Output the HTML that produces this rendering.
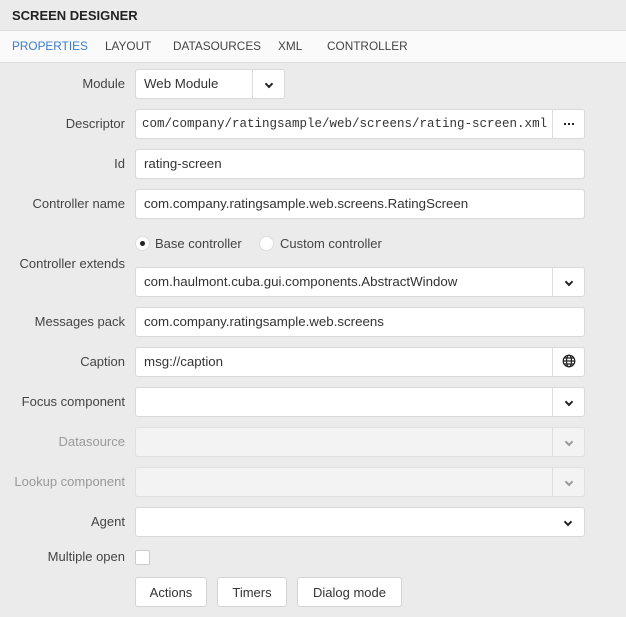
<!DOCTYPE html>
<html><head><style>
*{box-sizing:border-box;margin:0;padding:0}
body{width:626px;height:617px;background:#ebebeb;font-family:"Liberation Sans",sans-serif;font-size:13px;color:#333;position:relative;overflow:hidden}
.hdr{position:absolute;left:0;top:0;width:626px;height:31px;border-bottom:1px solid #ddd;font-weight:bold;font-size:13px;padding:8px 0 0 12px;color:#222}
.tabs{position:absolute;left:0;top:31px;width:626px;height:32px;background:#fafafa;border-bottom:1px solid #ddd}
.tabs span{position:absolute;top:8px;color:#444;font-size:11.8px}
.lbl{position:absolute;right:501px;text-align:right;white-space:nowrap;color:#444}
.f{position:absolute;left:135px;width:450px;height:30px;background:#fff;border:1px solid #d9d9d9;border-radius:3px;padding:6px 0 0 8px;white-space:nowrap;overflow:hidden;color:#333;font-size:13.3px}
.f.dis{background:#f3f3f3;border-color:#e0e0e0}
.btn{position:absolute;right:0;top:-1px;width:32px;height:30px;border-left:1px solid #ddd;text-align:center;padding-top:6px}
.mono{font-family:"Liberation Mono",monospace;font-size:12.5px}
.b{position:absolute;top:577px;height:30px;background:#fff;border:1px solid #d4d4d4;border-radius:3px;text-align:center;padding-top:7px}
.chev{display:inline-block;width:6px;height:6px;border-right:2px solid #222;border-bottom:2px solid #222;transform:rotate(45deg);margin-top:3px}
.dis .chev{border-color:#999}
.dots{position:absolute;top:14px;left:11px;width:2px;height:2px;background:#222;box-shadow:4px 0 0 #222,8px 0 0 #222}
</style></head><body>
<div class="hdr">SCREEN DESIGNER</div>
<div class="tabs">
<span style="left:12px;color:#3a7dc9">PROPERTIES</span>
<span style="left:105px">LAYOUT</span>
<span style="left:173px">DATASOURCES</span>
<span style="left:278px">XML</span>
<span style="left:327px">CONTROLLER</span>
</div>

<div class="lbl" style="top:76px">Module</div>
<div class="f" style="top:69px;width:150px">Web Module<div class="btn"><span class="chev"></span></div></div>

<div class="lbl" style="top:116px">Descriptor</div>
<div class="f mono" style="top:109px;padding-left:6px;padding-top:7px">com/company/ratingsample/web/screens/rating-screen.xml<div class="btn" style="background:#fff"><span class="dots"></span></div></div>

<div class="lbl" style="top:156px">Id</div>
<div class="f" style="top:149px">rating-screen</div>

<div class="lbl" style="top:196px">Controller name</div>
<div class="f" style="top:189px">com.company.ratingsample.web.screens.RatingScreen</div>

<div style="position:absolute;left:135px;top:236px;width:15px;height:15px;border-radius:50%;background:#fff;border:1px solid #ddd"><div style="position:absolute;left:4px;top:4px;width:5px;height:5px;border-radius:50%;background:#222"></div></div>
<div style="position:absolute;left:155px;top:236px;color:#444">Base controller</div>
<div style="position:absolute;left:259px;top:236px;width:15px;height:15px;border-radius:50%;background:#fff;border:1px solid #ddd"></div>
<div style="position:absolute;left:280px;top:236px;color:#444">Custom controller</div>

<div class="lbl" style="top:256px">Controller extends</div>
<div class="f" style="top:267px">com.haulmont.cuba.gui.components.AbstractWindow<div class="btn"><span class="chev"></span></div></div>

<div class="lbl" style="top:314px">Messages pack</div>
<div class="f" style="top:307px">com.company.ratingsample.web.screens</div>

<div class="lbl" style="top:354px">Caption</div>
<div class="f" style="top:347px">msg://caption<div class="btn" style="padding-top:7px"><svg width="14" height="14" viewBox="0 0 14 14" fill="none" stroke="#222" stroke-width="1.2"><circle cx="7" cy="7" r="5.8"/><ellipse cx="7" cy="7" rx="2.5" ry="5.8"/><path d="M1.2 7h11.6M2 4h10M2 10h10"/></svg></div></div>

<div class="lbl" style="top:394px">Focus component</div>
<div class="f" style="top:387px"><div class="btn"><span class="chev"></span></div></div>

<div class="lbl" style="top:434px;color:#999">Datasource</div>
<div class="f dis" style="top:427px"><div class="btn"><span class="chev"></span></div></div>

<div class="lbl" style="top:474px;color:#999">Lookup component</div>
<div class="f dis" style="top:467px"><div class="btn"><span class="chev"></span></div></div>

<div class="lbl" style="top:514px">Agent</div>
<div class="f" style="top:507px"><div class="btn" style="border-left:none"><span class="chev"></span></div></div>

<div class="lbl" style="top:549px">Multiple open</div>
<div style="position:absolute;left:135px;top:550px;width:15px;height:15px;background:#fff;border:1px solid #ccc;border-radius:2px"></div>

<div class="b" style="left:135px;width:72px">Actions</div>
<div class="b" style="left:217px;width:70px">Timers</div>
<div class="b" style="left:297px;width:105px">Dialog mode</div>
</body></html>
